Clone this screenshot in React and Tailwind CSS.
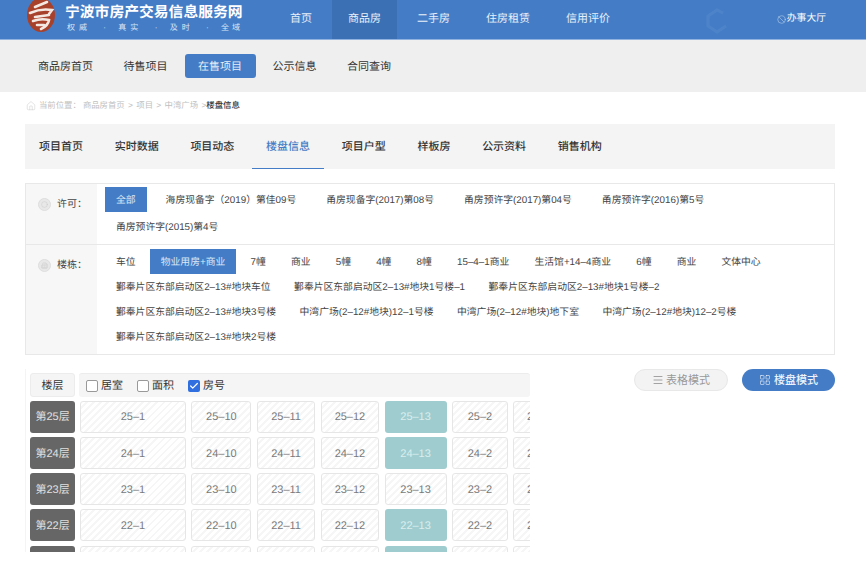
import React from 'react';
import { Menu, LayoutGrid, Home, Ban, Check, Building2, Circle } from 'lucide-react';

const NAV = ['首页', '商品房', '二手房', '住房租赁', '信用评价'];
const SUBNAV = ['商品房首页', '待售项目', '在售项目', '公示信息', '合同查询'];
const TABS = ['项目首页', '实时数据', '项目动态', '楼盘信息', '项目户型', '样板房', '公示资料', '销售机构'];

const PERMITS = [
  ['全部', '海房现备字（2019）第佳09号', '甬房现备字(2017)第08号', '甬房预许字(2017)第04号', '甬房预许字(2016)第5号'],
  ['甬房预许字(2015)第4号'],
];

const BUILDINGS = [
  { gap: 'gap-x-[3.2px]', items: ['车位', '物业用房+商业', '7幢', '商业', '5幢', '4幢', '8幢', '15–4–1商业', '生活馆+14–4商业', '6幢', '商业', '文体中心'] },
  { gap: 'gap-x-[1.5px]', items: ['鄞奉片区东部启动区2–13#地块车位', '鄞奉片区东部启动区2–13#地块1号楼–1', '鄞奉片区东部启动区2–13#地块1号楼–2'] },
  { gap: 'gap-x-[1.5px]', items: ['鄞奉片区东部启动区2–13#地块3号楼', '中湾广场(2–12#地块)12–1号楼', '中湾广场(2–12#地块)地下室', '中湾广场(2–12#地块)12–2号楼'] },
  { gap: 'gap-x-[1.5px]', items: ['鄞奉片区东部启动区2–13#地块2号楼'] },
];

const COLUMNS = [
  { no: '1', width: 'w-[106px]' },
  { no: '10', width: 'w-[60px]' },
  { no: '11', width: 'w-[58.5px]' },
  { no: '12', width: 'w-[58.5px]' },
  { no: '13', width: 'w-[62px]' },
  { no: '2', width: 'w-[56px]' },
  { no: '3', width: 'w-[52px]' },
];

const FLOORS = [
  { no: 25, sold: ['13'] },
  { no: 24, sold: ['13'] },
  { no: 23, sold: [] },
  { no: 22, sold: ['13'] },
  { no: 21, sold: ['13'] },
];

const Logo = () => (
  <svg width="28" height="32" viewBox="0 0 28 32" className="shrink-0">
    <ellipse cx="14" cy="15" rx="14" ry="17" fill="#a8412c" />
    <path d="M8 7 L20 2 M3 13 Q14 8 25 10 L22 14 M8 17 L22 15 M6 21 Q14 18 22 20 Q21 26 14 29 M10 25 L17 25" fill="none" stroke="#f4e9e2" strokeWidth="2.6" strokeLinecap="round" />
  </svg>
);

const Header = () => (
  <header className="relative h-10 shrink-0 bg-[#447dc6] border-b border-[#8fb2e0] flex items-stretch overflow-hidden">
    <svg width="24" height="26" viewBox="0 0 24 26" className="absolute left-[705px] top-[8px] text-white/5" fill="none" stroke="currentColor" strokeWidth="3">
      <path d="M18 5 L12 2 L3 8 V18 L12 24 L21 18" />
    </svg>
    <div className="w-[274px] shrink-0 pl-[27px] flex items-start">
      <Logo />
      <div className="ml-[10px] pt-[3px] text-white">
        <div className="w-[180px] text-[14.8px] leading-[20px] font-bold whitespace-nowrap">宁波市房产交易信息服务网</div>
        <div className="w-[176px] ml-[2px] flex justify-between text-[8px] leading-[10px] text-[#dbe7f6]">
          <span className="tracking-[4px]">权威</span><span>·</span>
          <span className="tracking-[4px]">真实</span><span>·</span>
          <span className="tracking-[4px]">及时</span><span>·</span>
          <span className="tracking-[3px]">全域</span>
        </div>
      </div>
    </div>
    <nav className="flex gap-1 relative">
      {NAV.map((item) => (
        <a key={item} className={`px-4 flex items-center text-[11px] text-[#e8f0fa] ${item === '商品房' ? 'bg-[#3b70b4]' : ''}`}>{item}</a>
      ))}
    </nav>
    <div className="ml-auto pr-[40px] flex items-center text-[9.8px] text-white relative">
      <Ban size={9} strokeWidth={1.2} className="mr-[1px] text-[#dbe7f6]" />
      办事大厅
    </div>
  </header>
);

const SubNav = () => (
  <div className="h-[52px] shrink-0 bg-[#efefef] pl-[24.5px] flex items-center gap-[3.5px]">
    {SUBNAV.map((item) => (
      <a key={item} className={`h-6 px-[13.5px] pt-[2px] rounded-[3px] flex items-center text-[11px] ${item === '在售项目' ? 'bg-[#447dc6] text-[#e4edf8]' : 'text-[#333]'}`}>{item}</a>
    ))}
  </div>
);

const Breadcrumb = () => (
  <div className="h-[32px] shrink-0 pl-[26px] pb-[5px] flex items-center text-[8.4px] text-[#c0c0c0]">
    <Home size={10} strokeWidth={1} className="mr-[3px]" />
    <span>当前位置：</span>
    <span className="ml-[2px] [word-spacing:1px]">商品房首页 &gt; 项目 &gt; 中湾广场 &gt; </span>
    <span className="text-[#333] font-medium">楼盘信息</span>
  </div>
);

const Tabs = () => (
  <div className="ml-[25px] w-[810px] h-[45px] shrink-0 bg-[#f4f4f4] flex gap-[3.7px]">
    {TABS.map((tab) => (
      <a key={tab} className={`px-[14px] pt-[2px] flex items-center justify-center text-[11px] font-medium ${tab === '楼盘信息' ? 'text-[#447dc6] border-b border-[#447dc6]' : 'text-[#333]'}`}>{tab}</a>
    ))}
  </div>
);

const FilterItem = ({ label, active }) => (
  <a className={`h-[25px] px-[11px] pt-[4px] flex items-center whitespace-nowrap text-[9.8px] ${active ? 'bg-[#447dc6] text-[#dce8f6]' : 'text-[#444]'}`}>{label}</a>
);

const FilterLabel = ({ icon, text }) => (
  <div className="w-[71px] shrink-0 bg-[#f7f7f7] pl-3 pt-[14px] flex items-start">
    <span className="w-[13px] h-[13px] rounded-full bg-[#e8e8e8] border border-[#dedede] flex items-center justify-center text-[#c9c9c9]">{icon}</span>
    <span className="ml-[6px] text-[10px] leading-[13px] text-[#444]">{text}</span>
  </div>
);

const Filters = () => (
  <div className="ml-[25px] w-[810px] mt-[14px] h-[172px] shrink-0 border border-[#e8e8e8] flex flex-col">
    <div className="h-[61px] border-b border-[#e8e8e8] flex">
      <FilterLabel icon={<Circle size={7} strokeWidth={1.5} />} text="许可：" />
      <div className="pl-[8px] pt-[3px] flex flex-col gap-[2px]">
        {PERMITS.map((row, i) => (
          <div key={i} className="flex gap-x-2">
            {row.map((item) => <FilterItem key={item} label={item} active={item === '全部'} />)}
          </div>
        ))}
      </div>
    </div>
    <div className="flex-1 flex">
      <FilterLabel icon={<Building2 size={7} strokeWidth={1.5} />} text="楼栋：" />
      <div className="pl-[8px] pt-[4px] flex flex-col">
        {BUILDINGS.map((row, i) => (
          <div key={i} className={`flex ${row.gap}`}>
            {row.items.map((item, j) => <FilterItem key={j} label={item} active={item === '物业用房+商业'} />)}
          </div>
        ))}
      </div>
    </div>
  </div>
);

const CheckOption = ({ label, checked, className }) => (
  <label className={`flex items-center text-[11px] text-[#333] ${className}`}>
    <span className={`w-3 h-3 rounded-[2px] flex items-center justify-center ${checked ? 'bg-[#2f6fe0]' : 'bg-white border border-[#999]'}`}>
      {checked && <Check size={10} strokeWidth={3} className="text-white" />}
    </span>
    <span className="ml-[3px] pt-[2px]">{label}</span>
  </label>
);

const Room = ({ label, width, sold }) => (
  <div className={`${width} h-[32px] pt-[2px] shrink-0 rounded-[3px] flex items-center justify-center text-[11px] ${sold
    ? 'bg-[#9fcccf] text-[#d9eeee]'
    : 'border border-[#e6e6e6] text-[#7a7a7a] bg-[repeating-linear-gradient(135deg,#ffffff_0px,#ffffff_3px,#f6f6f6_3px,#f6f6f6_5px)]'}`}>
    {label}
  </div>
);

const FloorTable = () => (
  <div className="w-[505px] h-[183px] overflow-hidden border-l border-[#f4f4f4] pl-[4px] pt-[4px]">
    <div className="flex gap-[4px] h-[24px]">
      <div className="w-[45px] shrink-0 pt-[2px] rounded-[3px] bg-[#f5f5f5] border border-[#ececec] flex items-center justify-center text-[11px] text-[#333]">楼层</div>
      <div className="flex-1 rounded-[3px] bg-[#f5f5f5] border-t border-[#ececec] pl-[7px] flex items-center">
        <CheckOption label="居室" className="w-[51px]" />
        <CheckOption label="面积" className="w-[51px]" />
        <CheckOption label="房号" checked />
      </div>
    </div>
    <div className="mt-[3.5px] flex flex-col gap-[4.3px]">
      {FLOORS.map((floor) => (
        <div key={floor.no} className="flex">
          <div className="w-[45px] h-[32px] pt-[2px] shrink-0 rounded-[3px] bg-[#666666] flex items-center justify-center text-[11px] text-[#e0e0e0]">第{floor.no}层</div>
          <div className="ml-[5px] flex gap-[5.4px]">
            {COLUMNS.map((col) => (
              <Room key={col.no} label={`${floor.no}–${col.no}`} width={col.width} sold={floor.sold.includes(col.no)} />
            ))}
          </div>
        </div>
      ))}
    </div>
  </div>
);

const ModeSwitch = () => (
  <div className="ml-auto pr-[31px] flex gap-[14px] items-start">
    <button className="w-[94px] h-[22px] rounded-full bg-[#f3f3f3] border border-[#e8e8e8] flex items-center justify-center text-[11px] text-[#999]">
      <Menu size={12} strokeWidth={1.5} className="mr-[2px] text-[#888]" />表格模式
    </button>
    <button className="w-[93px] h-[22px] rounded-full bg-[#447dc6] flex items-center justify-center text-[11px] font-medium text-[#eef4fb]">
      <LayoutGrid size={12} strokeWidth={1.2} className="mr-[3px]" />楼盘模式
    </button>
  </div>
);

export default function App() {
  return (
    <div className="w-[866px] h-[561px] bg-white overflow-hidden flex flex-col [text-rendering:geometricPrecision] font-['Liberation_Sans','Noto_Sans_CJK_SC',sans-serif]">
      <Header />
      <SubNav />
      <Breadcrumb />
      <Tabs />
      <Filters />
      <div className="mt-[14px] flex pl-[25px]">
        <FloorTable />
        <ModeSwitch />
      </div>
    </div>
  );
}
